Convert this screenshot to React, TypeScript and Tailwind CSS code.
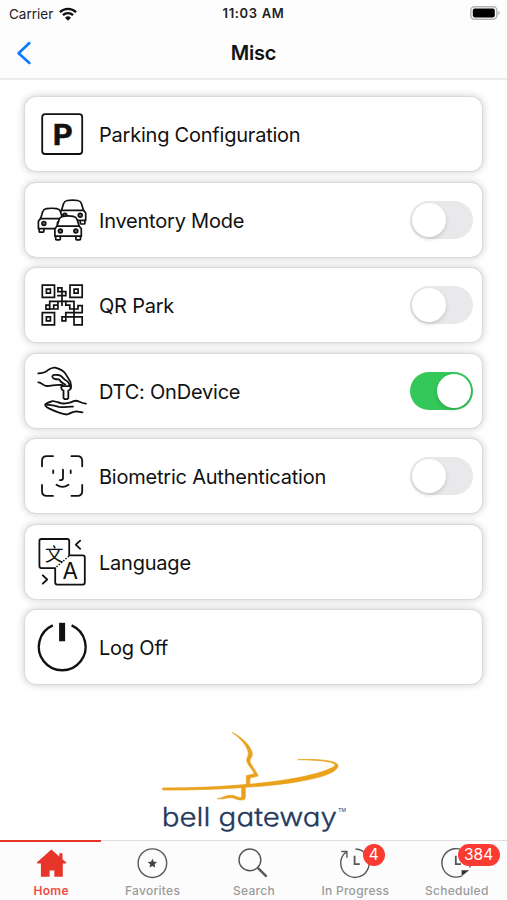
import { useState } from "react";
import type { ReactNode } from "react";
import clsx from "clsx";

const Icon = ({ children, width = 1.8 }: { children: ReactNode; width?: number }) => (
  <svg
    viewBox="0 0 50 50"
    className="h-[50px] w-[50px] shrink-0 overflow-visible"
    fill="none"
    stroke="#111"
    strokeWidth={width}
    strokeLinecap="round"
    strokeLinejoin="round"
  >
    {children}
  </svg>
);

const ParkingIcon = () => (
  <Icon>
    <rect x="5.2" y="5.2" width="40" height="39.8" rx="3" />
    <text x="25.8" y="35.6" textAnchor="middle" textLength="20" lengthAdjust="spacingAndGlyphs" fontSize="29" fontWeight="700" fill="#111" stroke="#111" strokeWidth=".5" className="font-['Inter',sans-serif]">
      P
    </text>
  </Icon>
);

const Car = ({ x, y }: { x: number; y: number }) => (
  <g transform={`translate(${x} ${y})`} fill="#fff">
    <path d="M1.8 20v4q0 .8.8.8h3q.8 0 .8-.8V20M22 20v4q0 .8.8.8h3q.8 0 .8-.8V20" />
    <path d="M3.2 11 5.3 4.3Q6.2 1.8 9 1.3q5.2-.9 10.4 0 2.8.5 3.7 3L25.2 11l2.2 2.8v7.4H1v-7.4z" />
    <path d="M3.2 11.2h22" />
    <circle cx="6.5" cy="16" r="1.9" fill="#777" />
    <circle cx="21.9" cy="16" r="1.9" fill="#777" />
  </g>
);

const CarsIcon = () => (
  <Icon width={1.7}>
    <Car x={21.3} y={4.2} />
    <Car x={0.4} y={12.4} />
    <Car x={16.9} y={20} />
  </Icon>
);

const QrIcon = () => (
  <Icon width={1.7}>
    <g strokeLinejoin="miter" strokeLinecap="square">
      <path d="M5.3 5.1h12.2v12.2H5.3zM33 5.1h12.2v12.2H33zM5.3 32.7h12.2v12.2H5.3z" />
      <path d="M9.4 9.2h4v4h-4zM37.1 9.2h4v4h-4zM9.4 36.8h4v4h-4z" />
      <path d="M20.9 7.8h4v3.8h-4zM25 11.6h3.8v4H25zM25 15.6v9.6M20.9 15.6H25" />
      <path d="M12.7 25.2v-3.9H37v15.5M12.7 25.2H9v4h3.7zM12.7 29h4v-3.8h4.2V29h-3.4M20.9 25.2v-3.9" />
      <path d="M28.8 21.3v3.9h4V29h8.2v-3.4h4.2v7H28.8v4.2h16.4v8H37v-8M25 36.8h3.8v4H25z" />
    </g>
  </Icon>
);

const KeyHandIcon = () => (
  <Icon>
    <path d="M1.3 7.4C5.5 7.2 8 6.7 11 4.1c2.5-1.8 4.4-2.9 7.2-2.5 5 1.4 8.5 3.1 10.2 6l4.8 7.8c1.1 2.7.8 5 .2 7" />
    <path d="M1.3 16.3C4.7 16 6 20 9.5 20c5 .2 9-1.9 14.8-1" />
    <path d="M32.6 20c-.4-3-2-5-4.7-6.2-2.6-2.6-3.6-4.6-6.3-4.8-3.2-.4-6.1-.2-6.3 1.6-.1 2.2 3.4 2.7 6.6 2.7 1.8 3.2 4.1 4 6.3 5.2" />
    <path d="M25.6 19c-2 2.2-1.6 4.8.9 5.6v7.6l1.1 1h2.6l1.1-1v-7.6c2.6-.8 3.4-3 2.2-5.2M26 20.2h6" />
    <path d="M22.5 36.6 15.9 35c-3.4 1.2-7.3 2.4-7.7 3.7-.2 1.2 1.4 2.5 3.7 3.7 7 3.4 12.4 5.6 17.9 6.1 4.4-1.3 5.4-3.1 9.5-3.2l6.2 1" />
    <path d="M13.8 39.2c3 0 5.5.8 8 1.6 5.4.9 9.7-.6 14.2-.2M9 38.7l5.4.4M22.5 36.8c5 1.8 11.5-.2 14.2-1.7 3.8-1.7 7.2 2.3 12.2 2.5" />
  </Icon>
);

const FaceIcon = () => (
  <Icon width={1.8}>
    <path d="M5 15.3V10q0-4.8 4.8-4.8H16M34.4 5.2h6q4.8 0 4.8 4.8v5.3M45.2 34v6q0 4.9-4.8 4.9h-6M16 44.9H9.8Q5 44.9 5 40v-6" />
    <path d="M16.2 19.4v2.6M33.7 19.4v2.6M26 18.7v8.4q0 2-2 2h-1.2M19.5 33.8q6 4.2 12 0" />
  </Icon>
);

const LanguageIcon = () => (
  <Icon width={1.8}>
    <path d="M18 31.1H4.4Q2.4 31 2.4 29V4q0-2 2-2h25.8q2 0 2 2v14.4h13.6q2 0 2 2v25.2q0 2-2 2H20.2q-2 0-2-2V31.1" />
    <path d="m43.2 3.6-4.4 4.1 4.4 4.1M5.8 38.3l4.4 4.2-4.4 4.2" />
    <path d="m20 29.5 11.8-10.4" strokeDasharray=".1 2.9" strokeWidth="1.6" />
    <text x="17.2" y="23.5" textAnchor="middle" fontSize="18.5" fontWeight="400" fill="#111" stroke="none" className="font-['Noto_Sans_CJK_SC',sans-serif]">
      文
    </text>
    <text x="33.3" y="41.8" textAnchor="middle" fontSize="22.5" fill="#111" stroke="none" className="font-['Inter',sans-serif]">
      A
    </text>
  </Icon>
);

const PowerIcon = () => (
  <Icon width={2.4}>
    <path d="M15.8 3.4a23.4 23.4 0 1 0 18.8 0" strokeLinecap="butt" />
    <path d="M25.1.8v18.5" strokeWidth="6" strokeLinecap="butt" />
  </Icon>
);

const Toggle = ({ on, onClick }: { on: boolean; onClick: () => void }) => (
  <button
    role="switch"
    aria-checked={on}
    onClick={onClick}
    className={clsx(
      "ml-auto flex h-[38px] w-[63px] items-center rounded-full px-[2px]",
      on ? "justify-end bg-[#34c759]" : "justify-start bg-[#e9e9eb]"
    )}
  >
    <span className="h-[34px] w-[34px] rounded-full bg-white shadow-[0_2px_4px_rgba(0,0,0,0.15)]" />
  </button>
);

const rows = [
  { label: "Parking Configuration", icon: <ParkingIcon /> },
  { label: "Inventory Mode", icon: <CarsIcon />, toggle: true },
  { label: "QR Park", icon: <QrIcon />, toggle: true },
  { label: "DTC: OnDevice", icon: <KeyHandIcon />, toggle: true },
  { label: "Biometric Authentication", icon: <FaceIcon />, toggle: true },
  { label: "Language", icon: <LanguageIcon /> },
  { label: "Log Off", icon: <PowerIcon /> },
];

const Logo = () => (
  <svg viewBox="0 0 630 330" className="ml-[150px] mt-[40px] h-[110px] w-[210px] shrink-0" fill="none">
    <g fill="#eaa21c" stroke="#eaa21c" strokeWidth="2" strokeLinejoin="round">
      <path d="M246 25c35 17 60 46 61 65 0 10-7 13-7 20 0 12 21 33 24 46l-24 6-1 24h-10v-31l24-6c-5-13-24-29-23-41 0-8 6-12 5-21-2-19-21-42-49-62z" />
      <path d="M38 192c90 0 180-4 255-11 110-9 220-29 260-54 11-12-30-19-110-20 70-3 121 4 121 18 0 33-145 57-265 64-70 6-170 10-261 9z" />
      <path d="M275 187h11v33c0 7-5 8-14 8-13 0-18-8-33-7-12 1-17 5-38 3 22-3 25-10 41-10 14 0 20 7 29 7 4 0 4-1 4-5z" />
    </g>
    <text x="35" y="306" textLength="526" lengthAdjust="spacingAndGlyphs" fontSize="76" fontWeight="300" fill="#23385a" stroke="#23385a" strokeWidth="1" className="font-['Inter','Lato',sans-serif]" style={{ fontFeatureSettings: "'cv11'" }}>
      bell gateway
    </text>
    <text x="565" y="263" textLength="23" lengthAdjust="spacingAndGlyphs" fontSize="16" fill="#23385a" className="font-['Inter',sans-serif]">
      TM
    </text>
  </svg>
);

const TabIcon = ({ children }: { children: ReactNode }) => (
  <svg viewBox="0 0 32 32" className="h-8 w-8" fill="none" stroke="#55565a" strokeWidth="1.4">
    {children}
  </svg>
);

const tabs = [
  {
    label: "Home",
    active: true,
    icon: <path d="M16.4 2.6 1.8 15.6l.7 1h3.4v13.2h8.7v-6.3h4.7v6.3h8.5V16.6h3l.6-1-3.9-3.4V6.2h-3.2v3.4z" fill="#e8352a" stroke="none" />,
  },
  {
    label: "Favorites",
    icon: (
      <>
        <circle cx="16.4" cy="16.2" r="14.3" />
        <path d="m16.4 11.8 1.4 3 3.3.3-2.5 2.2.7 3.2-2.9-1.6-2.9 1.6.7-3.2-2.5-2.2 3.3-.3z" fill="#444" stroke="none" />
      </>
    ),
  },
  {
    label: "Search",
    icon: (
      <>
        <circle cx="12.9" cy="12.9" r="10.9" />
        <path d="m20.8 20.8 8.8 8.8" strokeWidth="2.4" />
      </>
    ),
  },
  {
    label: "In Progress",
    badge: "4",
    badgeClass: "left-[58.5px] w-[22px]",
    icon: (
      <>
        <path d="M16.5 2A14.2 14.2 0 1 1 7.2 5M2.3 4.5h5.6v6.2" />
        <path d="M15.6 8.7v8.4h5.2" strokeWidth="1.8" />
      </>
    ),
  },
  {
    label: "Scheduled",
    badge: "384",
    badgeClass: "left-[52px] w-[42px]",
    icon: (
      <>
        <path d="M22 28.8A14.2 14.2 0 1 1 30.3 16l-.5 4.5" />
        <path d="M15.8 8.7v8.4h5.2" strokeWidth="1.8" />
        <path d="M21.5 23.2h7.7l-7.4 5.8z" fill="#333" stroke="none" />
      </>
    ),
  },
];

const TabBar = () => (
  <nav className="mt-auto grid h-[60px] grid-cols-5 border-t border-[#dedede] bg-[#fcfcfc]">
    {tabs.map((tab) => (
      <div key={tab.label} className="relative flex flex-col items-center pt-[6px]">
        {tab.active && <div className="absolute inset-x-0 -top-px h-[2px] bg-[#e8352a]" />}
        <TabIcon>{tab.icon}</TabIcon>
        <span
          className={clsx(
            "mt-[4px] whitespace-nowrap pl-px text-[12px] leading-4 tracking-[0.28px]",
            tab.active ? "font-semibold text-[#ef4b43]" : "font-medium text-[#9a9a9b]"
          )}
        >
          {tab.label}
        </span>
        {tab.badge && (
          <span
            className={clsx(
              "absolute top-[3px] flex h-[22px] items-center justify-center rounded-full bg-[#fb3b31] text-[15.5px] text-white",
              tab.badgeClass
            )}
          >
            {tab.badge}
          </span>
        )}
      </div>
    ))}
  </nav>
);

const StatusBar = () => (
  <div className="grid h-[28px] grid-cols-3 items-center pl-[9px] pr-[7px] text-[13.5px] text-[#222]">
    <div className="flex items-center gap-[6px]">
      <span>Carrier</span>
      <svg viewBox="0 0 18 14" className="h-[14px] w-[18px]" fill="none" stroke="#111" strokeWidth="2.4">
        <path d="M.9 5.1a11.7 11.7 0 0 1 16.2 0M3.9 8.2a7.3 7.3 0 0 1 10.2 0" />
        <path d="m9 13.8-3-3.1a4.3 4.3 0 0 1 6 0z" fill="#111" stroke="none" />
      </svg>
    </div>
    <div className="-ml-[2px] whitespace-nowrap text-center font-semibold tracking-[0.65px] text-[13px]">11:03 AM</div>
    <svg viewBox="0 0 30 14" className="-mt-[2px] h-[14px] w-[30px] justify-self-end">
      <rect x=".8" y=".8" width="26" height="12.4" rx="3.6" fill="#fff" stroke="#b4b4b4" strokeWidth="1.5" />
      <rect x="2.8" y="2.6" width="22" height="8.8" rx="1.8" />
      <path d="M28.3 5q1.4.5 1.4 2t-1.4 2z" fill="#aaa" />
    </svg>
  </div>
);

export default function App() {
  const [enabled, setEnabled] = useState<Record<string, boolean>>({ "DTC: OnDevice": true });

  return (
    <div className="flex h-[900px] w-[507px] flex-col overflow-hidden bg-white font-['Inter',sans-serif] text-[#111]">
      <header className="h-[80px] shrink-0 border-b-2 border-[#ececec] bg-[#fdfdfd]">
        <StatusBar />
        <div className="grid h-[49px] grid-cols-3 items-center pl-[16px] pr-[16px]">
          <svg viewBox="0 0 16 24" className="h-6 w-4" fill="none" stroke="#0a7aff" strokeWidth="2.7" strokeLinecap="round" strokeLinejoin="round">
            <path d="M13.4 2.1 2.6 12.2l10.8 9.7" />
          </svg>
          <h1 className="text-center text-[20px] font-semibold tracking-[-0.2px]">Misc</h1>
        </div>
      </header>
      <main className="flex flex-col gap-[11.5px] px-[25px] pt-[17px]">
        {rows.map((row) => (
          <section
            key={row.label}
            className="flex h-[74px] items-center rounded-[11px] bg-white pl-[12px] pr-[9.5px] shadow-[0_0_7px_2px_rgba(0,0,0,0.15),0_0_2px_rgba(0,0,0,0.2)]"
          >
            {row.icon}
            <span className="ml-3 whitespace-nowrap pt-[2px] text-[20px] tracking-[-0.22px]">{row.label}</span>
            {row.toggle && (
              <Toggle
                on={!!enabled[row.label]}
                onClick={() => setEnabled({ ...enabled, [row.label]: !enabled[row.label] })}
              />
            )}
          </section>
        ))}
      </main>
      <Logo />
      <TabBar />
    </div>
  );
}
